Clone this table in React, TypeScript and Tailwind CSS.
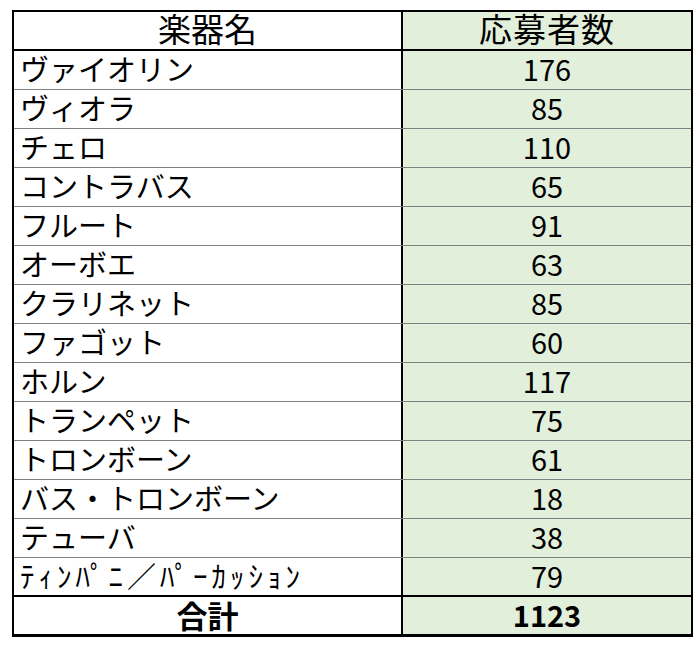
import React from "react";

const ROWS: [string, number][] = [
  ["ヴァイオリン", 176],
  ["ヴィオラ", 85],
  ["チェロ", 110],
  ["コントラバス", 65],
  ["フルート", 91],
  ["オーボエ", 63],
  ["クラリネット", 85],
  ["ファゴット", 60],
  ["ホルン", 117],
  ["トランペット", 75],
  ["トロンボーン", 61],
  ["バス・トロンボーン", 18],
  ["テューバ", 38],
  ["ﾃｨﾝﾊﾟﾆ／ﾊﾟｰｶｯｼｮﾝ", 79],
];

const App = () => {
  const total = ROWS.reduce((sum, [, n]) => sum + n, 0);

  return (
    <div className="min-h-[647px] bg-white pt-[10px] pl-[12px] text-black font-['Noto_Sans_CJK_JP','Noto_Sans',sans-serif]">
      <div className="w-[681px] border-2 border-b-[3px] border-black">
        {/* header */}
        <div className="flex h-[39px] border-b-2 border-black">
          <div className="w-[389px] border-r-2 border-black flex items-center justify-center pb-[4px] text-[33px] leading-none">
            楽器名
          </div>
          <div className="flex-1 bg-[#e2efda] flex items-center justify-center pb-[4px] text-[33px] tracking-[1px] leading-none">
            応募者数
          </div>
        </div>

        {ROWS.map(([name, count], i) => (
          <div
            key={name}
            className={
              i === ROWS.length - 1
                ? "flex h-[39px] border-b-2 border-black"
                : "flex h-[39px] border-b border-[#808080]"
            }
          >
            <div
              className={
                i === ROWS.length - 1
                  ? "w-[389px] border-r-2 border-black flex items-center pl-[6px] pb-[3px] text-[29px] leading-none whitespace-nowrap tracking-[4px]"
                  : "w-[389px] border-r-2 border-black flex items-center pl-[6px] pb-[3px] text-[29px] leading-none whitespace-nowrap"
              }
            >
              {name}
            </div>
            <div className="flex-1 bg-[#e2efda] flex items-center justify-center pb-[3px] text-[29px] leading-none">
              {count}
            </div>
          </div>
        ))}

        {/* total */}
        <div className="flex h-[37px]">
          <div className="w-[389px] border-r-2 border-black flex items-center justify-center pb-[3px] text-[31px] font-bold leading-none">
            合計
          </div>
          <div className="flex-1 bg-[#e2efda] flex items-center justify-center pb-[3px] text-[29px] font-bold leading-none">
            {total}
          </div>
        </div>
      </div>
    </div>
  );
};

export default App;
